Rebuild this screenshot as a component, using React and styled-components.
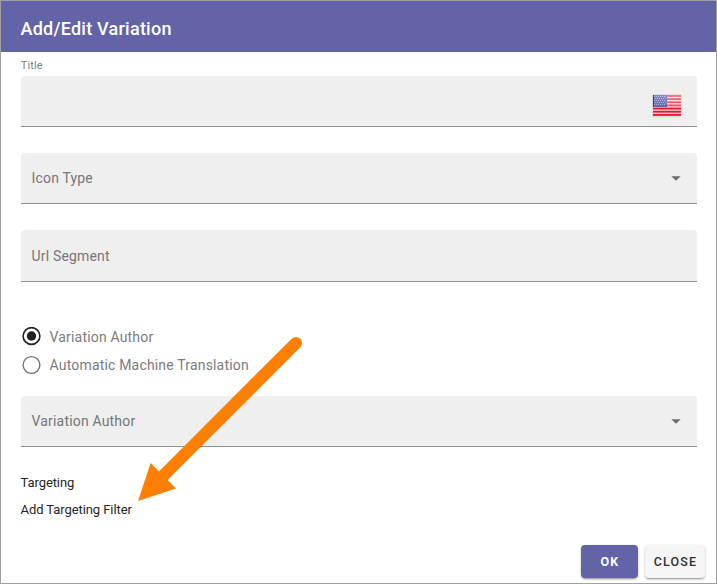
import React from "react";
import styled, { createGlobalStyle } from "styled-components";

const GlobalStyle = createGlobalStyle`
  *, *::before, *::after { box-sizing: border-box; }
  body { margin: 0; background: #fff; font-family: Roboto, sans-serif; }
`;

const Dialog = styled.main`
  position: relative;
  width: 717px;
  height: 584px;
  display: flex;
  flex-direction: column;
  overflow: hidden;
  border: 1px solid #a0a0a0;
  background: #fff;
`;

const Header = styled.header`
  flex: none;
  height: 51px;
  display: flex;
  align-items: center;
  padding: 4px 19.5px 0;
  background: #6264a7;
`;

const Heading = styled.h1`
  margin: 0;
  font-size: 18px;
  font-weight: 500;
  line-height: 24px;
  letter-spacing: 0.24px;
  color: #fff;
`;

const Form = styled.form`
  display: flex;
  flex-direction: column;
  padding: 6px 19px 0 20px;
`;

const FieldLabel = styled.label`
  height: 18px;
  margin-left: -0.3px;
  line-height: 15px;
  font-size: 11px;
  letter-spacing: 0.15px;
  color: #808080;
`;

const Field = styled.div`
  height: ${({ $height = 51 }) => $height}px;
  margin-bottom: 26px;
  display: flex;
  align-items: center;
  justify-content: space-between;
  padding: 0 15px 0 10.5px;
  border-bottom: 1px solid #8e8e8e;
  border-radius: 4px 4px 0 0;
  background: #efefef;
  font-size: 14px;
  line-height: 20px;
  letter-spacing: 0.18px;
  color: #767676;
`;

const Caret = styled.svg`
  width: 10px;
  height: 5px;
  margin-right: 1px;
`;

const Flag = styled.svg`
  width: 30px;
  height: 23px;
  margin: 9px -0.4px 0 auto;
`;

const Options = styled.div`
  display: flex;
  flex-direction: column;
  gap: 8px;
  margin: 19px 0 21px;
`;

const Option = styled.label`
  height: 20px;
  display: flex;
  align-items: center;
  gap: 8.5px;
  font-size: 14px;
  line-height: 20px;
  letter-spacing: 0.18px;
  color: #7c7c7c;
`;

const RadioIcon = styled.svg`
  width: 20px;
  height: 20px;
`;

const Line = styled.div`
  height: 27px;
  margin-left: -0.5px;
  line-height: 20px;
  font-size: 13px;
  letter-spacing: -0.08px;
  color: #262626;
`;

const Actions = styled.footer`
  display: flex;
  justify-content: flex-end;
  gap: 7px;
  margin-top: auto;
  padding: 0 11px 5px;
`;

const Button = styled.button`
  width: ${({ $primary }) => ($primary ? 57 : 60)}px;
  height: 33px;
  padding: 0 0 0 1px;
  border: 0;
  border-radius: 4px;
  background: ${({ $primary }) => ($primary ? "#6264a7" : "#f5f5f5")};
  color: ${({ $primary }) => ($primary ? "#fff" : "#303030")};
  box-shadow: 0 2px 2px -1px rgba(0, 0, 0, 0.3), 0 1px 3px rgba(0, 0, 0, 0.2);
  font: ${({ $primary }) => ($primary ? 700 : 500)} 12.5px Roboto, sans-serif;
  letter-spacing: 1.15px;
`;

const Pointer = styled.svg`
  position: absolute;
  left: 136px;
  top: 334px;
  width: 170px;
  height: 170px;
  pointer-events: none;
`;

function DropdownCaret() {
  return (
    <Caret viewBox="0 0 10 5">
      <path d="M0.3 0.2H9.7L5 4.8Z" fill="#6b6b6b" />
    </Caret>
  );
}

function USFlag() {
  const dots = [];
  for (let row = 0; row < 5; row++) {
    for (let col = 0; col < 6; col++) {
      dots.push(
        <rect key={`${row}-${col}`} x={2 + col * 2 + (row % 2)} y={2 + row * 2} width="1" height="1" fill="#9296cc" />
      );
    }
  }
  return (
    <Flag viewBox="0 0 30 23">
      <defs>
        <linearGradient id="shine" x1="0" y1="0" x2="0" y2="1">
          <stop offset="0" stopColor="#fff" stopOpacity="0.42" />
          <stop offset="1" stopColor="#fff" stopOpacity="0.22" />
        </linearGradient>
      </defs>
      <rect x="0.4" y="0.6" width="29" height="22.2" rx="1" fill="#c9c9c9" />
      <rect x="1" y="1" width="28" height="21" fill="#f8dfe1" />
      {[0, 1, 2, 3, 4, 5, 6].map((i) => (
        <rect key={i} x="1" y={1 + i * 3.15} width="28" height="1.9" fill="#e8142c" />
      ))}
      <rect x="1" y="1" width="14" height="12" fill="#303a98" />
      {dots}
      <rect x="1" y="1" width="28" height="12" fill="url(#shine)" />
      <path d="M1.5 1V13" stroke="#3037a0" />
    </Flag>
  );
}

function Radio({ checked }) {
  return (
    <RadioIcon viewBox="0 0 20 20">
      <circle cx="10.5" cy={checked ? 9 : 10} r="8.4" fill="none" stroke={checked ? "#202020" : "#757575"} strokeWidth={checked ? 1.6 : 1.4} />
      {checked && <circle cx="10.5" cy="9" r="4.7" fill="#202020" />}
    </RadioIcon>
  );
}

export default function App() {
  return (
    <>
      <GlobalStyle />
      <Dialog>
        <Header><Heading>Add/Edit Variation</Heading></Header>
        <Form>
          <FieldLabel>Title</FieldLabel>
          <Field><USFlag /></Field>
          <Field>Icon Type<DropdownCaret /></Field>
          <Field $height={52}>Url Segment</Field>
          <Options>
            <Option><Radio checked />Variation Author</Option>
            <Option><Radio />Automatic Machine Translation</Option>
          </Options>
          <Field>Variation Author<DropdownCaret /></Field>
          <Line>Targeting</Line>
          <Line>Add Targeting Filter</Line>
        </Form>
        <Actions>
          <Button type="button" $primary>OK</Button>
          <Button type="button">CLOSE</Button>
        </Actions>
        <Pointer viewBox="137 335 170 170">
          <path d="M163 476L296 343" stroke="#ff8000" strokeWidth="12.2" strokeLinecap="round" />
          <path d="M138 501L150.6 463L176 488.4Z" fill="#ff8000" />
        </Pointer>
      </Dialog>
    </>
  );
}
